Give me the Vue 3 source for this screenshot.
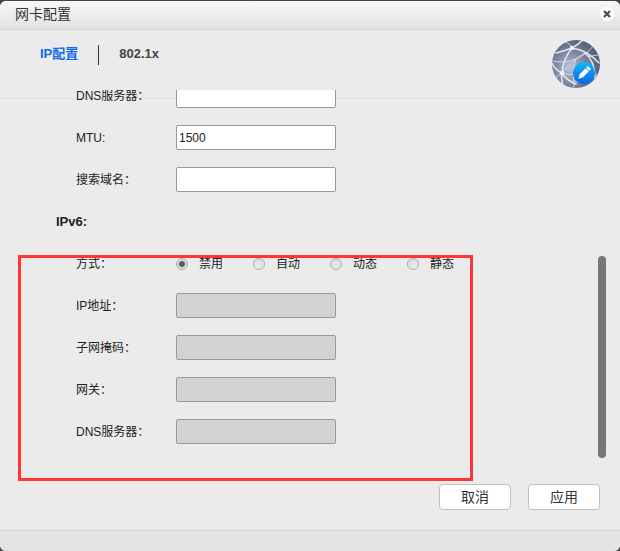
<script setup>
import { ref } from 'vue'

const mtu = ref('1500')
const dns = ref('')
const domain = ref('')
const mode = ref('disabled')
const modes = [
  { value: 'disabled', text: '禁用' },
  { value: 'auto', text: '自动' },
  { value: 'dynamic', text: '动态' },
  { value: 'static', text: '静态' },
]
const v6Fields = [
  { id: 'v6-ip', text: 'IP地址：' },
  { id: 'v6-mask', text: '子网掩码：' },
  { id: 'v6-gateway', text: '网关：' },
  { id: 'v6-dns', text: 'DNS服务器：' },
]
</script>

<template>
  <main class="dialog" lang="zh-CN">
    <header class="titlebar">
      <h1 class="title">网卡配置</h1>
      <button class="close" type="button" aria-label="关闭">
        <svg viewBox="0 0 14 14" width="14" height="14">
          <circle cx="7" cy="7" r="7" fill="#fff" />
          <path d="M4 4l6 6M10 4l-6 6" stroke="#4c4c4c" stroke-width="2.2" />
        </svg>
      </button>
    </header>

    <div class="top">
      <nav class="tabs">
        <a class="tab active" href="#ip">IP配置</a>
        <a class="tab" href="#dot1x">802.1x</a>
      </nav>
      <svg class="globe" viewBox="0 0 48 48" width="48" height="48" aria-hidden="true">
        <defs>
          <radialGradient id="ball" cx="0.38" cy="0.58" r="0.6">
            <stop offset="0" stop-color="#b9c3dd" />
            <stop offset="0.5" stop-color="#828ba6" />
            <stop offset="1" stop-color="#566079" />
          </radialGradient>
          <linearGradient id="badge" x1="0" y1="0" x2="0" y2="1">
            <stop offset="0" stop-color="#12b8f6" />
            <stop offset="1" stop-color="#0768e8" />
          </linearGradient>
          <clipPath id="disc"><circle cx="24" cy="24" r="24" /></clipPath>
        </defs>
        <circle cx="24" cy="24" r="24" fill="url(#ball)" />
        <g clip-path="url(#disc)" fill="none" stroke="#e4e7ee" stroke-linecap="round">
          <g stroke-width="1.6">
            <path d="M4 13Q12 11 20 8Q26 5 31 0" />
            <path d="M20 8Q35 10 47 23" />
            <path d="M20 8Q11 19 10 33Q9 38 11 46" />
            <path d="M0 23Q3 30 10 33Q14 40 24 44" />
            <path d="M33 13Q43 21 43 38" />
          </g>
          <g stroke-width="1" stroke-opacity="0.8">
            <path d="M1 21Q13 24 24 19Q36 14 41 6" />
            <path d="M24 19Q17 25 10 33" />
            <path d="M33 13Q26 17 24 19Q20 28 22 47" />
            <path d="M13 2Q18 3 20 8" />
            <path d="M10 33Q17 36 24 34" />
            <path d="M37 17Q42 15 46 15" />
            <path d="M22 41Q36 47 45 34" />
            <path d="M10 33Q6 36 3 38" />
          </g>
        </g>
        <g fill="#f1f3f7">
          <circle cx="20" cy="8" r="2.2" />
          <circle cx="10" cy="33" r="2.2" />
        </g>
        <circle cx="32" cy="33" r="11" fill="url(#badge)" />
        <g transform="translate(32 33) rotate(45)" fill="#fff">
          <path d="M-2.2-7.6h4.4v2.2h-4.4zM-2.2-4.6h4.4V4L0 8-2.2 4z" />
        </g>
      </svg>
    </div>

    <form id="nic" class="scroll" @submit.prevent>
      <div class="fields">
        <div class="row">
          <label class="label" for="dns">DNS服务器：</label>
          <input id="dns" v-model="dns" class="text" type="text" />
        </div>
        <div class="row">
          <label class="label" for="mtu">MTU:</label>
          <input id="mtu" v-model="mtu" class="text" type="text" />
        </div>
        <div class="row">
          <label class="label" for="domain">搜索域名：</label>
          <input id="domain" v-model="domain" class="text" type="text" />
        </div>
        <h2 class="section">IPv6:</h2>
        <div class="row" role="radiogroup" aria-labelledby="mode-label">
          <span id="mode-label" class="label">方式：</span>
          <div class="options">
            <label v-for="m in modes" :key="m.value" class="option">
              <input v-model="mode" class="radio" type="radio" name="mode" :value="m.value" />
              {{ m.text }}
            </label>
          </div>
        </div>
        <div v-for="f in v6Fields" :key="f.id" class="row">
          <label class="label" :for="f.id">{{ f.text }}</label>
          <input :id="f.id" class="text" type="text" :disabled="mode !== 'static'" />
        </div>
      </div>
      <div class="track"><div class="thumb"></div></div>
    </form>

    <div class="actions">
      <button class="btn" type="button">取消</button>
      <button class="btn" type="submit" form="nic">应用</button>
    </div>
    <footer class="foot"></footer>
    <div class="highlight"></div>
  </main>
</template>

<style>
body {
  background: #464446;
}
</style>

<style scoped>
.dialog,
.dialog * {
  box-sizing: border-box;
}
.dialog {
  position: relative;
  display: flex;
  flex-direction: column;
  min-height: calc(100vh - 1px);
  margin-top: 1px;
  overflow: hidden;
  border-radius: 6px;
  background: #ebebeb;
  color: #222;
  font: 12px/16px "Liberation Sans", "Noto Sans CJK SC", sans-serif;
}
.titlebar {
  display: flex;
  align-items: center;
  justify-content: space-between;
  height: 29px;
  padding: 0 6px 2px 15px;
  border-bottom: 1px solid #d6d6d6;
  background: linear-gradient(#f7f7f7, #e2e2e2);
}
.title {
  margin: 0;
  font-size: 14px;
  font-weight: 400;
  color: #333;
}
.close {
  display: flex;
  padding: 0;
  border: 0;
  background: none;
}
.top {
  display: flex;
  justify-content: space-between;
  height: 69px;
  padding: 10px 20px 0;
  border-bottom: 1px solid #dfdfdf;
}
.tabs {
  display: flex;
  height: 20px;
  margin-top: 5px;
}
.tab {
  padding: 0 20px;
  color: #444;
  font-size: 13px;
  font-weight: 700;
  line-height: 18px;
  text-decoration: none;
}
.tab + .tab {
  border-left: 1px solid #333;
}
.active {
  color: #0b6bea;
}
.scroll {
  position: relative;
  display: flex;
  justify-content: space-between;
  margin-top: -9px;
  padding: 0 14px 0 56px;
  overflow: hidden;
}
.fields {
  display: flex;
  flex-direction: column;
  gap: 17px;
  margin-top: -7px;
  padding-bottom: 14px;
}
.row {
  display: flex;
  align-items: center;
  height: 25px;
  padding-left: 20px;
}
.label {
  width: 100px;
}
.text {
  width: 160px;
  height: 25px;
  padding: 0 2px;
  border: 1px solid #999;
  border-radius: 2px;
  background: #fff;
  color: #222;
  font: inherit;
}
.text:disabled {
  background: #d2d2d2;
}
.section {
  margin: 0;
  font-size: 13px;
  line-height: 25px;
}
.options {
  display: flex;
  gap: 30px;
}
.option {
  display: flex;
  align-items: center;
  gap: 11px;
}
.radio {
  appearance: none;
  width: 12px;
  height: 12px;
  margin: 0;
  border: 1px solid #aaa;
  border-radius: 50%;
  background: linear-gradient(#dcdcdc, #ececec);
}
.radio:checked {
  background: radial-gradient(circle, #555 0 2px, #e4e4e4 4px);
}
.track {
  display: flex;
  align-items: flex-end;
}
.thumb {
  width: 8px;
  height: 202px;
  border-radius: 4px;
  background: #777;
}
.actions {
  display: flex;
  justify-content: flex-end;
  gap: 17px;
  padding: 26px 20px 20px;
}
.btn {
  width: 72px;
  height: 26px;
  padding: 0;
  border: 1px solid #c0c0c0;
  border-radius: 4px;
  background: #fff;
  color: #333;
  font: inherit;
  font-size: 14px;
}
.foot {
  height: 21px;
  margin-top: auto;
  border-top: 1px solid #d3d3d3;
  background: #e4e4e4;
}
.highlight {
  position: absolute;
  top: 254px;
  left: 18px;
  width: 455px;
  height: 226px;
  border: 3px solid #ff3434;
  pointer-events: none;
}
</style>
